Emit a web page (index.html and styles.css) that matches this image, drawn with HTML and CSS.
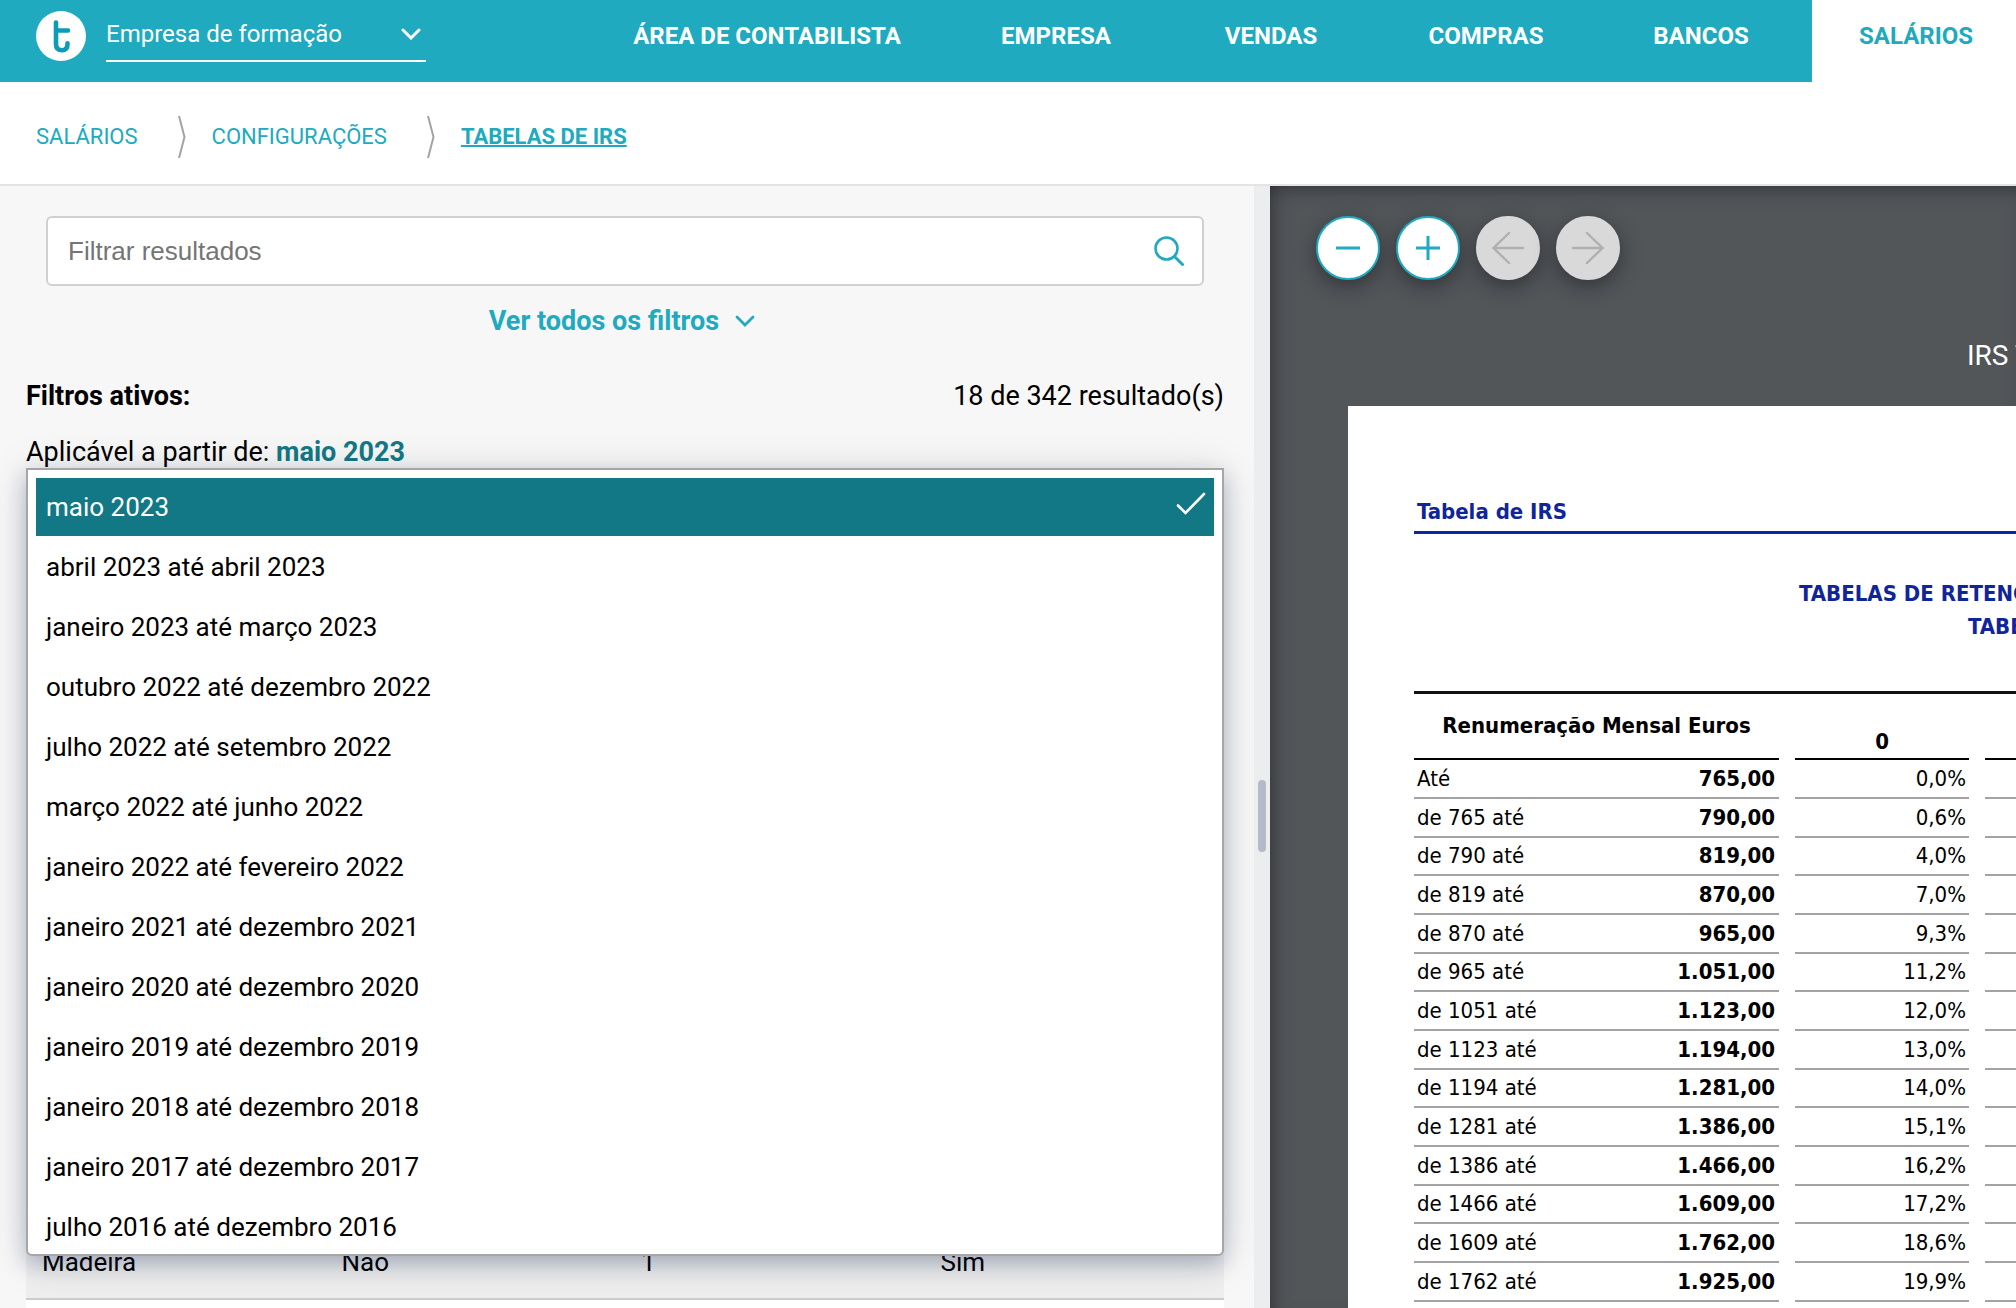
FILE: index.html
```html
<!DOCTYPE html>
<html lang="pt">
<head>
<meta charset="utf-8">
<title>Tabelas de IRS</title>
<link rel="stylesheet" href="styles.css">
</head>
<body>
<header class="topbar">
  <div class="brand">
    <svg class="logo" viewBox="0 0 50 50" aria-hidden="true"><circle cx="25" cy="25" r="25" fill="#fff"/><path d="M20 11.500V33c0 4.500 2.500 6.200 6 6.200s5.500-2.200 5.500-6v-1M20 19.500H32" stroke="#0e9bb5" stroke-width="4.600" stroke-linecap="round" fill="none"/></svg>
    <div class="company">
      <select class="company-select" aria-label="Empresa"><option>Empresa de formação</option></select>
      <svg class="company-arrow" viewBox="0 0 20 12" aria-hidden="true"><path d="M2 2l8 8 8-8" fill="none" stroke="#fff" stroke-width="3" stroke-linecap="round"/></svg>
    </div>
  </div>
  <nav class="mainnav">
    <a class="tab tab-wide" href="#">ÁREA DE CONTABILISTA</a>
    <a class="tab" href="#">EMPRESA</a>
    <a class="tab" href="#">VENDAS</a>
    <a class="tab" href="#">COMPRAS</a>
    <a class="tab" href="#">BANCOS</a>
    <a class="tab active" href="#">SALÁRIOS</a>
  </nav>
</header>
<nav class="crumbs" aria-label="Localização">
  <a href="#">SALÁRIOS</a>
  <svg class="crumb-sep" viewBox="0 0 8 44" aria-hidden="true"><path d="M1 1l5.500 21L1 43" fill="none" stroke="#a3a3a3" stroke-width="2"/></svg>
  <a href="#">CONFIGURAÇÕES</a>
  <svg class="crumb-sep" viewBox="0 0 8 44" aria-hidden="true"><path d="M1 1l5.500 21L1 43" fill="none" stroke="#a3a3a3" stroke-width="2"/></svg>
  <a class="current" href="#">TABELAS DE IRS</a>
</nav>
<main class="workspace">
  <section class="panel">
    <div class="search">
      <input class="search-input" type="text" placeholder="Filtrar resultados" aria-label="Filtrar resultados">
      <button class="search-button" aria-label="Pesquisar"><svg viewBox="0 0 30 30"><circle cx="12.500" cy="12.500" r="11" fill="none" stroke="#20aac0" stroke-width="2.600"/><path d="M20.500 20.500l8 8" stroke="#20aac0" stroke-width="3" stroke-linecap="round"/></svg></button>
    </div>
    <button class="more">Ver todos os filtros <svg viewBox="0 0 20 12" aria-hidden="true"><path d="M2 2l8 8 8-8" fill="none" stroke="#20aac0" stroke-width="2.800" stroke-linecap="round"/></svg></button>
    <div class="summary"><strong>Filtros ativos:</strong><span>18 de 342 resultado(s)</span></div>
    <p class="applied">Aplicável a partir de: <a href="#">maio 2023</a></p>
    <ul class="periods" role="listbox" aria-label="Aplicável a partir de">
      <li><button class="period selected" role="option" aria-selected="true">maio 2023<svg viewBox="0 0 30 24" aria-hidden="true"><path d="M2 13.500l7.500 7.500L28 2" fill="none" stroke="#fff" stroke-width="2.600" stroke-linecap="round"/></svg></button></li>
      <li><button class="period" role="option">abril 2023 até abril 2023</button></li>
      <li><button class="period" role="option">janeiro 2023 até março 2023</button></li>
      <li><button class="period" role="option">outubro 2022 até dezembro 2022</button></li>
      <li><button class="period" role="option">julho 2022 até setembro 2022</button></li>
      <li><button class="period" role="option">março 2022 até junho 2022</button></li>
      <li><button class="period" role="option">janeiro 2022 até fevereiro 2022</button></li>
      <li><button class="period" role="option">janeiro 2021 até dezembro 2021</button></li>
      <li><button class="period" role="option">janeiro 2020 até dezembro 2020</button></li>
      <li><button class="period" role="option">janeiro 2019 até dezembro 2019</button></li>
      <li><button class="period" role="option">janeiro 2018 até dezembro 2018</button></li>
      <li><button class="period" role="option">janeiro 2017 até dezembro 2017</button></li>
      <li><button class="period" role="option">julho 2016 até dezembro 2016</button></li>
    </ul>
    <table class="results">
      <tbody>
        <tr><td>Madeira</td><td>Não</td><td>1</td><td>Sim</td></tr>
        <tr><td></td><td></td><td></td><td></td></tr>
      </tbody>
    </table>
  </section>
  <div class="splitter"><span class="grip"></span></div>
  <section class="viewer">
    <div class="tools">
      <button class="tool" aria-label="Reduzir"><svg viewBox="0 0 32 32"><path d="M4 16h24" stroke="#20aac0" stroke-width="3"/></svg></button>
      <button class="tool" aria-label="Ampliar"><svg viewBox="0 0 32 32"><path d="M4 16h24M16 4v24" stroke="#20aac0" stroke-width="3"/></svg></button>
      <button class="tool" aria-label="Anterior" disabled><svg viewBox="0 0 32 32"><path d="M17 1L1.500 16 17 31M1.500 16H31" fill="none" stroke="#b0b0b0" stroke-width="2.400" stroke-linecap="round"/></svg></button>
      <button class="tool" aria-label="Seguinte" disabled><svg viewBox="0 0 32 32"><path d="M15 1l15.500 15L15 31M30.500 16H1" fill="none" stroke="#b0b0b0" stroke-width="2.400" stroke-linecap="round"/></svg></button>
    </div>
    <h1 class="viewer-title">IRS Tabela</h1>
    <article class="paper">
      <h2 class="doc-name">Tabela de IRS</h2>
      <div class="doc-heading"><p>TABELAS DE RETENÇÃO</p><p class="sub">TABELA</p></div>
      <table class="rates">
        <colgroup><col class="c-label"><col class="c-value"><col class="c-gap"><col class="c-rate"><col class="c-gap"><col class="c-rate"></colgroup>
        <thead><tr><th colspan="2">Renumeração Mensal Euros</th><td class="gap"></td><th class="low">0</th><td class="gap"></td><th></th></tr></thead>
        <tbody>
          <tr><td>Até</td><td class="num">765,00</td><td class="gap"></td><td class="pct">0,0%</td><td class="gap"></td><td></td></tr>
          <tr><td>de 765 até</td><td class="num">790,00</td><td class="gap"></td><td class="pct">0,6%</td><td class="gap"></td><td></td></tr>
          <tr><td>de 790 até</td><td class="num">819,00</td><td class="gap"></td><td class="pct">4,0%</td><td class="gap"></td><td></td></tr>
          <tr><td>de 819 até</td><td class="num">870,00</td><td class="gap"></td><td class="pct">7,0%</td><td class="gap"></td><td></td></tr>
          <tr><td>de 870 até</td><td class="num">965,00</td><td class="gap"></td><td class="pct">9,3%</td><td class="gap"></td><td></td></tr>
          <tr><td>de 965 até</td><td class="num">1.051,00</td><td class="gap"></td><td class="pct">11,2%</td><td class="gap"></td><td></td></tr>
          <tr><td>de 1051 até</td><td class="num">1.123,00</td><td class="gap"></td><td class="pct">12,0%</td><td class="gap"></td><td></td></tr>
          <tr><td>de 1123 até</td><td class="num">1.194,00</td><td class="gap"></td><td class="pct">13,0%</td><td class="gap"></td><td></td></tr>
          <tr><td>de 1194 até</td><td class="num">1.281,00</td><td class="gap"></td><td class="pct">14,0%</td><td class="gap"></td><td></td></tr>
          <tr><td>de 1281 até</td><td class="num">1.386,00</td><td class="gap"></td><td class="pct">15,1%</td><td class="gap"></td><td></td></tr>
          <tr><td>de 1386 até</td><td class="num">1.466,00</td><td class="gap"></td><td class="pct">16,2%</td><td class="gap"></td><td></td></tr>
          <tr><td>de 1466 até</td><td class="num">1.609,00</td><td class="gap"></td><td class="pct">17,2%</td><td class="gap"></td><td></td></tr>
          <tr><td>de 1609 até</td><td class="num">1.762,00</td><td class="gap"></td><td class="pct">18,6%</td><td class="gap"></td><td></td></tr>
          <tr><td>de 1762 até</td><td class="num">1.925,00</td><td class="gap"></td><td class="pct">19,9%</td><td class="gap"></td><td></td></tr>
        </tbody>
      </table>
    </article>
  </section>
</main>
</body>
</html>
```
FILE: styles.css
```css
* { box-sizing: border-box; }
body {
  margin: 0;
  height: 100vh;
  display: flex;
  flex-direction: column;
  overflow: hidden;
  background: #fff;
  color: #000;
  font: 26px/30px Roboto, "Liberation Sans", sans-serif;
}
button { border: 0; padding: 0; background: none; font: inherit; color: inherit; cursor: pointer; }
a { text-decoration: none; color: #20aac0; }
h1, h2, p, ul { margin: 0; padding: 0; }
li { list-style: none; }
svg { display: block; flex: none; }

/* Top bar */
.topbar { flex: none; display: flex; height: 82px; overflow: hidden; background: #20aac0; }
.brand { flex: none; display: flex; gap: 20px; width: 589px; padding: 11px 0 0 36px; }
.logo { width: 50px; height: 50px; }
.company { display: grid; align-items: center; width: 320px; height: 51px; padding-bottom: 4px; border-bottom: 2px solid #fff; }
.company-select, .company-arrow { grid-area: 1 / 1; }
.company-select {
  width: 100%;
  height: 45px;
  padding: 0;
  border: 0;
  appearance: none;
  background: none;
  color: #fff;
  font: 24px/28px Roboto, "Liberation Sans", sans-serif;
}
.company-arrow { justify-self: end; width: 20px; height: 12px; margin-right: 5px; pointer-events: none; }
.mainnav { flex: none; display: flex; gap: 7px; }
.tab {
  display: flex;
  justify-content: center;
  width: 208px;
  padding-top: 21px;
  color: #fff;
  font-size: 24px;
  font-weight: 700;
}
.tab-wide { width: 356px; }
.tab.active { background: #fff; color: #20aac0; }

/* Breadcrumb */
.crumbs {
  flex: none;
  display: flex;
  align-items: center;
  height: 104px;
  padding: 7px 36px 0;
  border-bottom: 2px solid #e4e4e4;
  font-size: 22px;
}
.crumb-sep { width: 8px; height: 44px; margin: 0 26px 0 40px; }
.crumbs .current { font-weight: 700; text-decoration: underline; text-decoration-thickness: 2px; }

/* Workspace */
.workspace { flex: 1; min-height: 0; display: grid; grid-template-columns: minmax(0, 627fr) 16px minmax(0, 373fr); }
.panel { padding: 30px 30px 0 26px; overflow: hidden; background: #f7f7f7; }
.search {
  display: flex;
  align-items: center;
  height: 70px;
  margin: 0 20px;
  padding: 0 18px 0 20px;
  border: 2px solid #d0d0d0;
  border-radius: 6px;
  background: #fff;
}
.search-input {
  flex: 1;
  height: 60px;
  padding: 0;
  border: 0;
  outline: 0;
  background: none;
  font: 26px/30px "Liberation Sans", Arial, sans-serif;
}
.search-input::placeholder { color: #757575; }
.search-button svg { width: 30px; height: 30px; }
.more {
  display: flex;
  align-items: center;
  gap: 16px;
  margin: 20px auto 0;
  padding-right: 6px;
  color: #20aac0;
  font-size: 27px;
  font-weight: 700;
}
.more svg { width: 20px; height: 12px; }
.summary { display: flex; justify-content: space-between; margin-top: 45px; font-size: 27px; }
.applied { margin-top: 26px; font-size: 27px; }
.applied a { color: #147885; font-weight: 700; }

.periods {
  position: relative;
  height: 788px;
  margin-top: 1px;
  padding: 8px;
  overflow: hidden;
  border: 2px solid #a6a6a6;
  border-radius: 0 0 6px 6px;
  background: #fff;
  box-shadow: 0 8px 20px rgba(9, 30, 80, .24), 0 4px 44px rgba(9, 30, 50, .14);
}
.period {
  display: flex;
  align-items: center;
  justify-content: space-between;
  width: 100%;
  height: 58px;
  margin-bottom: 2px;
  padding: 0 8px 0 10px;
  text-align: left;
}
.period.selected { background: #137886; color: #fff; }
.period svg { width: 30px; height: 24px; margin-bottom: 6px; }

.results { width: 100%; margin-top: -31px; border-collapse: collapse; table-layout: fixed; }
.results tr { height: 74px; background: #fff; }
.results tr:nth-child(odd) { background: #eee; }
.results td { padding: 0 16px; border-bottom: 2px solid #ccc; }

.splitter { display: flex; justify-content: center; background: #ebedef; }
.grip { width: 8px; height: 72px; margin-top: 594px; border-radius: 4px; background: #b4bac7; }

/* Document viewer */
.viewer {
  overflow: hidden;
  background: #525659;
  box-shadow: inset 14px 0 18px -12px rgba(40, 40, 45, .7), inset 0 14px 18px -12px rgba(40, 40, 45, .7);
}
.tools { display: flex; gap: 16px; padding: 30px 0 0 46px; }
.tool {
  display: flex;
  align-items: center;
  justify-content: center;
  width: 64px;
  height: 64px;
  border: 2px solid #20aac0;
  border-radius: 50%;
  background: #fff;
  box-shadow: 0 6px 20px rgba(40, 40, 45, .75);
}
.tool svg { width: 32px; height: 32px; }
.tool:disabled { border-color: #d9d9d9; background: #d9d9d9; }
.viewer-title { margin: 61px 0 35px 697px; color: #fff; font-size: 28px; line-height: 30px; font-weight: 400; white-space: nowrap; }
.paper {
  width: 1240px;
  height: 1754px;
  margin-left: 78px;
  padding: 90px 66px 0;
  background: #fff;
  font: 22px/28px "DejaVu Sans Condensed", "DejaVu Sans", sans-serif;
}
.doc-name { padding: 2px 3px 5px; border-bottom: 3px solid #10259a; color: #10259a; font-size: 22px; line-height: 28px; }
.doc-heading { padding: 43px 0 48px 385px; color: #10259a; font-weight: 700; line-height: 33px; white-space: nowrap; }
.doc-heading .sub { padding-left: 169px; }
.rates { width: 726px; border-collapse: separate; border-spacing: 0; table-layout: fixed; }
.c-label { width: 180px; }
.c-value { width: 185px; }
.c-gap { width: 16px; }
.c-rate { width: 174px; }
.rates th, .rates td { padding: 0 3px; border-bottom: 2px solid #a3a3a3; }
.rates thead tr { height: 69px; }
.rates thead th, .rates thead td { border-top: 3px solid #111; border-bottom-color: #000; }
.rates .low { padding-bottom: 2px; vertical-align: bottom; }
.rates tbody tr { height: 39px; }
.rates tbody tr:nth-child(3n) { height: 38px; }
.rates .num { padding-right: 4px; font-weight: 700; text-align: right; }
.rates .pct { text-align: right; }
.rates td.gap { padding: 0; border-bottom: 0; }
```
